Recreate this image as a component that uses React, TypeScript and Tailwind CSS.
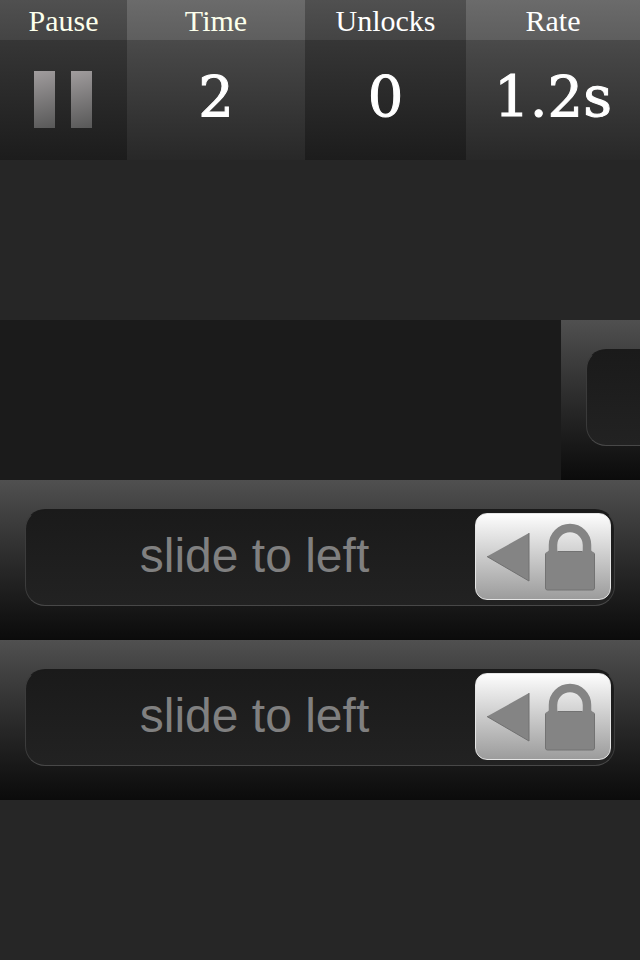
import { useState } from 'react';
import clsx from 'clsx';

const SHADES = {
  dark: {
    label: 'bg-linear-to-b from-[#505050] to-[#444444]',
    body: 'bg-linear-to-b from-[#363636] to-[#1c1c1c]',
  },
  light: {
    label: 'bg-linear-to-b from-[#6b6b6b] to-[#5e5e5e]',
    body: 'bg-linear-to-b from-[#4a4a4a] to-[#282828]',
  },
};

const STATS = [
  { label: 'Time', value: '2', shade: SHADES.light, tint: 'text-[#fcffec]' },
  { label: 'Unlocks', value: '0', shade: SHADES.dark, tint: 'text-white' },
  { label: 'Rate', value: '1.2s', shade: SHADES.light, tint: 'text-white' },
];

const LABEL = 'block h-10 text-center font-["Liberation_Serif",serif] text-[30px] leading-[42px]';

function PauseButton() {
  const [paused, setPaused] = useState(false);

  return (
    <button type="button" aria-pressed={paused} onClick={() => setPaused(!paused)} className="block text-center">
      <span className={clsx(LABEL, SHADES.dark.label, 'text-[#fcffec]')}>Pause</span>
      <span className={clsx('flex h-[120px] items-center justify-center gap-4 pr-0.5 pb-0.5', SHADES.dark.body)}>
        <span className="h-[57px] w-[21px] bg-linear-165 from-[#a19d9e] to-[#585858]" />
        <span className="h-[57px] w-[21px] bg-linear-165 from-[#a19d9e] to-[#585858]" />
      </span>
    </button>
  );
}

function StatusBar() {
  return (
    <header className="grid grid-cols-[127fr_178fr_161fr_174fr]">
      <PauseButton />
      {STATS.map((stat) => (
        <div key={stat.label}>
          <div className={clsx(LABEL, stat.shade.label, stat.tint)}>{stat.label}</div>
          <div
            className={clsx(
              'h-[120px] text-center font-["DejaVu_Serif",serif] text-[56px] leading-[114px] text-white [-webkit-text-stroke:1px_white]',
              stat.shade.body,
            )}
          >
            {stat.value}
          </div>
        </div>
      ))}
    </header>
  );
}

function ThumbIcon() {
  return (
    <svg viewBox="0 0 134 85" className="h-full w-full" aria-hidden="true">
      <path d="M11 42.5 L53 19 V67 Z" fill="#848484" />
      <path d="M11 42.5 L53 67 V19" fill="none" stroke="#707070" strokeWidth="1" />
      <path d="M77 40 V31 a17 17 0 0 1 34 0 V40" fill="none" stroke="#848484" strokeWidth="8.5" />
      <path d="M69.5 39.5 a1.5 1.5 0 0 1 1.5 -1.5 L73 36.5 H81 L82 37.5 H106 L107 36.5 H115 L117 38 a1.5 1.5 0 0 1 1.5 1.5 V74 a2 2 0 0 1 -2 2 H71.5 a2 2 0 0 1 -2 -2 Z" fill="#848484" />
      <path d="M69.5 39.5 V74 a2 2 0 0 0 2 2 H116.5 a2 2 0 0 0 2 -2 V39.5 M82 37.5 H106" fill="none" stroke="#727272" strokeWidth="1" />
    </svg>
  );
}

// offset is how far the row still has to slide in, as a percentage of the screen width
function SlideRow({ offset = 0 }: { offset?: number }) {
  return (
    <li className="overflow-hidden bg-[#1b1b1b]">
      <div
        className="h-40 bg-linear-to-b from-[#505050] to-[#0b0b0b] px-[25px] pt-[29px]"
        style={{ transform: `translateX(${offset}%)` }}
      >
        <div className="flex h-[97px] items-start rounded-[20px] border border-t-[#1a1a1a] border-x-[#3c3c3c] border-b-[#484848] bg-linear-to-b from-[#1a1a1a] to-[#222222] pt-[3px] pr-[3px]">
          {offset === 0 && (
            <>
              <span className="flex-1 pl-2 text-center font-['Liberation_Sans',sans-serif] text-[48px] leading-[86px] text-[#808080]">
                slide to left
              </span>
              <button
                type="button"
                aria-label="Unlock"
                className="h-[87px] w-[136px] rounded-xl border border-[#e4e4e4] bg-linear-to-b from-[#fdfdfd] to-[#9c9c9c]"
              >
                <ThumbIcon />
              </button>
            </>
          )}
        </div>
      </div>
    </li>
  );
}

export default function App() {
  return (
    <main className="min-h-screen bg-[#262626]">
      <StatusBar />
      <ul className="pt-40">
        <SlideRow offset={87.66} />
        <SlideRow />
        <SlideRow />
      </ul>
    </main>
  );
}
